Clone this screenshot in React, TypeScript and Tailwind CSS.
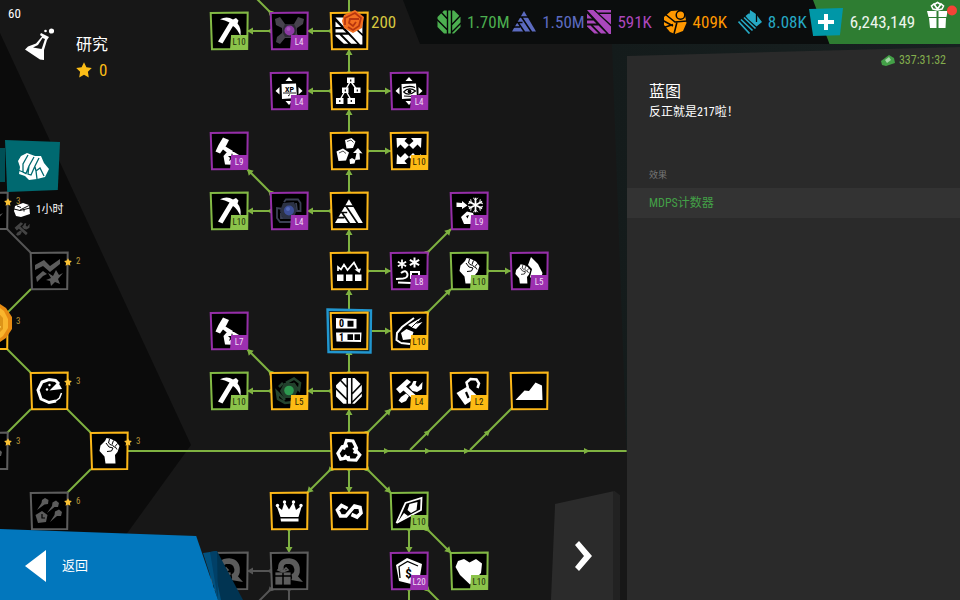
import { useState } from 'react';
import type { ReactNode } from 'react';

type Tone = 'gold' | 'green' | 'purple' | 'locked';

interface TreeNode {
  id: string;
  name: string;
  x: number;
  y: number;
  tone: Tone;
  icon: string;
  level?: string;
  stars?: number;
}

interface Edge {
  from: [number, number];
  to: [number, number];
  locked?: boolean;
  plain?: boolean;
}

const toneColor: Record<Tone, string> = {
  gold: '#fbb718',
  green: '#82b944',
  purple: '#952ea8',
  locked: '#5c5c5c',
};

const badgeClass: Record<Tone, string> = {
  gold: 'bg-[#fdbb14] text-[#2b2200]',
  green: 'bg-[#8bc34a] text-[#1d2b0d]',
  purple: 'bg-[#9c30b0] text-[#f0dcf4]',
  locked: 'bg-[#5c5c5c] text-white',
};

// resource symbols, drawn on a 24x24 grid
const leafSymbol = (
  <>
    <path fill="currentColor" d="M7 0.5H17L23.5 7V17L17 23.5H7L0.5 17V7Z" />
    <path stroke="#060707" strokeWidth="1.4" fill="none" d="M10.500 0V24M14.500 0V24M0 9.500L10.500 20M4 2L10.500 9M24 5L14.500 15M24 13L14.500 22.500" />
  </>
);

const triangleSymbol = (
  <>
    <path fill="currentColor" d="M12 1L24 21.5H0Z" />
    <path stroke="#060707" strokeWidth="1.5" fill="none" d="M7 7H17M3 12.500H10.500M9.500 7L19.500 22M0 17H8M6 12.500L12.500 22" />
  </>
);

const stripeSymbol = (
  <path fill="currentColor" d="M0 0H6.500L24 16.500V24H22ZM8.500 0H24V2.500H11ZM12.500 4H24V14.500ZM0 3.500L5 8.500H0ZM0 10.500H6.500L9.500 13.500H0ZM0 15.500H3.500L11.500 23.500H7.500L0 16.500ZM6 15.500H11.500L19.500 23.500H14Z" />
);

const orbSymbol = (
  <>
    <path fill="currentColor" d="M8 1L15 0.5L22 5L23.5 13L20 21L12 24L7 22L1 15L1 7Z" />
    <path stroke="#060707" strokeWidth="1.600" fill="none" d="M2 4L12 12L24 11M0 10.500L10 16M1 17.500L10 14.500M14 12L11 24" />
    <circle cx="17.500" cy="5" r="4.300" fill="currentColor" stroke="#060707" strokeWidth="1.500" />
  </>
);

const shardSymbol = (
  <>
    <path fill="currentColor" d="M12 0L18 4V12L11.500 6.500ZM19 5.500L24 12L18.500 16.500L10 9L7.500 6L10.500 3.500Z" />
    <path stroke="currentColor" strokeWidth="1.700" fill="none" d="M6 7.500L17.500 18.500M3 9.500L14.500 20.500M0.500 11.500L11.500 23.500" />
    <path stroke="#060707" strokeWidth="1.300" fill="none" d="M18.500 3V12" />
  </>
);

const pickaxe = (
  <path d="M11 8.300Q18 4.500 24 8.500L27 7L29.500 9.500L28.500 12.500Q32.500 17 31.500 25Q28 17.500 24 15L13.500 32.500L9 30.500L20.500 11.500Q16 9 11 8.300Z" />
);

const fist = (
  <>
    <path d="M16 10L17.500 7L22 8L27 10.500L30.500 15L28.500 21L26 24L26.500 32.500H16.500L15.500 25.500L10.500 20L11.500 14.500Z" />
    <path stroke="#000" strokeWidth="1" fill="none" d="M17 12L20 16L24 17L22.500 20L18 20.500M20.500 8L19.500 12L22.500 14.500M24.500 9.500L23 13.500L25.500 16.500M28.500 12.500L26 15.500L28 18.500" />
  </>
);

const hammerRock = (
  <>
    <path d="M14 6.500L20 9L17.500 14L16.500 15.500L24 20L21 24L14 18.500L11 22.500L6.500 20.500L9.500 14Z" />
    <path d="M14.500 25L18.500 20.500L25 21L30 24L32 34L16 33.500Z" />
    <path fill="#000" d="M23 22L24 25L27 25L25 27L26 30L23 28L20 30L21 27L19 25H22Z" />
  </>
);

const compassArrows = <path d="M20 6L23.500 10H16.500ZM6.500 20L10.500 16V23.500ZM33.500 20L29.500 16V23.500ZM20 34L16.500 30H23.500ZM12.500 13L27 12.500L28 27L13 28Z" />;

const corner = 'M7.500 7L18 7L15.500 10L20 14L16 18L11.500 13.500L8 17Z';

const snow = 'M0 -6V6M-5.500 -3L5.500 3M-5.500 3L5.500 -3';

const knotArm = 'M14.500 18.500L17.500 9.500L24 10L27.500 17L25.500 22.500';

const giftQuarter = (
  <>
    <path fill="none" stroke="currentColor" strokeWidth="5.500" d="M12 19Q10.500 10 20 10Q29 11 28 21Q27 25 23 26" />
    <path d="M26 22L34 31L22 29Z" />
    <path stroke="#000" strokeWidth="0.800" d="M6 21H22V34H6Z" />
    <path stroke="#000" strokeWidth="1.500" d="M14 21V34M6 25H22" />
    <path fill="none" stroke="currentColor" strokeWidth="1.600" d="M14 21L9 19L11 17L14 20L17 17L19 19Z" />
  </>
);

const icons: Record<string, ReactNode> = {
  pickaxe,
  fist,
  hammerRock,
  giftQuarter,
  droneViolet: (
    <>
      <path fill="#47424d" d="M6 8L11 6L16 13H25L29 6L35 8L34 13L28 17V23L34 29L31 33L25 27H16L11 33L7 31L8 26L13 22V17L7 14Z" />
      <path fill="#2f2b36" d="M16 13H25L28 19L25 26H16L13 20Z" />
      <circle cx="20.500" cy="19.500" r="5" fill="#8d3aa3" />
      <circle cx="19.500" cy="18" r="2" fill="#a758ba" />
    </>
  ),
  droneBlue: (
    <>
      <path fill="none" stroke="#3b4054" strokeWidth="1.800" d="M15 11L17 8.500H29L31.500 12V20H28L27 12M14 18L8 17V27L11 31H22L24 28M12 22V27H17" />
      <path fill="#2c3245" d="M14 12L25 11L28 19L24 28L14 28L11 20Z" />
      <circle cx="20" cy="19.500" r="5" fill="#3d4f99" />
      <circle cx="19" cy="18" r="2" fill="#5469b7" />
    </>
  ),
  droneGreen: (
    <>
      <path fill="none" stroke="#25442f" strokeWidth="2.600" d="M17 12L25 7.500L31 12L30 19L27 16L24 12M26 27L24 31L16 32L9 28L8 21L12 25L16 29M10 16L14 12" />
      <path fill="#21402b" d="M15 12H26L29 19L25 27H15L11 20Z" />
      <circle cx="20" cy="19.500" r="4.800" fill="#2e9950" />
    </>
  ),
  leaf: <g transform="translate(6.500 6.500) scale(1.120)">{leafSymbol}</g>,
  triangle: <g transform="translate(6 7) scale(1.160)">{triangleSymbol}</g>,
  stripes: <g transform="translate(6.500 6.500) scale(1.120)">{stripeSymbol}</g>,
  xp: (
    <>
      {compassArrows}
      <path stroke="#000" strokeWidth="0.900" d="M14 22H27M19 25L21 23.500" />
      <text x="20.500" y="20.500" textAnchor="middle" fontSize="8" fontWeight="700" fill="#000">XP</text>
    </>
  ),
  eye: (
    <>
      {compassArrows}
      <path fill="none" stroke="#000" strokeWidth="1.200" d="M14 17Q20 14 26 16.500M14.500 21Q20 15.500 26.500 20Q20 25.500 14.500 21M15 25L24 25.500" />
      <circle cx="20.500" cy="20.500" r="1.900" fill="#000" />
    </>
  ),
  network: (
    <>
      <path stroke="currentColor" strokeWidth="1.400" fill="none" d="M21.500 10L16.500 19L11 29M16.500 19L22 29M21.500 10L28 19" />
      <path d="M18 6.500H25.500V12H18ZM13 16.500H19.500V22H13ZM25 16.500H31.500V22H25ZM7 27H14.500V33H7ZM18.500 27H26V33H18.500Z" />
      <path stroke="#000" strokeWidth="1.200" d="M21.700 8.500V10.500M16.300 18.500V20.500M28.300 18.500V20.500M10.800 29V31M22.300 29V31" />
    </>
  ),
  rocks: (
    <>
      <path d="M16 9L22.500 7L26.500 10.500L24 17L17.500 17.500ZM7.500 20.500L14 17.500L20 21.500L17 29.500L9.500 30ZM20.500 28.500L23 27L26.500 29L25.500 32.500L21 33ZM29 17L33.500 22.500L30.500 22L31 28.500L26 29L27.500 22L24 22Z" />
      <path stroke="#000" strokeWidth="0.700" fill="none" d="M18 10.500L22 9L24.500 11.500M10 22L14 20L17 22.500" />
    </>
  ),
  expand: (
    <>
      <path d={corner} />
      <path d={corner} transform="translate(40 0) scale(-1 1)" />
      <path d={corner} transform="translate(0 40) scale(1 -1)" />
      <path d={corner} transform="translate(40 40) scale(-1 -1)" />
    </>
  ),
  freeze: (
    <>
      <path d="M7.500 11.500L13 12V10L18.500 14.500L13 18V16H7.500ZM12 26L18 20.500L24 22L26 28L23 33H15Z" />
      <path d="M17 25L20 24L18.500 27.500Z" fill="#000" />
      <g stroke="currentColor" strokeWidth="1.400" fill="none" transform="translate(26.500 14) scale(1.200)">
        <path d={snow} />
        <path strokeWidth="0.800" d="M-2 -6L0 -4L2 -6M-2 6L0 4L2 6M-6.200 -1L-3.500 -2L-4 -4.800M6.200 1L3.500 2L4 4.800M-6.200 1L-3.500 2L-4 4.800M6.200 -1L3.500 -2L4 -4.800" />
      </g>
    </>
  ),
  volatility: (
    <>
      <path d="M8 23.500H14.500V30H8ZM17 23.500H23.500V30H17ZM26 23.500H32.500V30H26Z" />
      <path stroke="currentColor" strokeWidth="1.700" fill="none" d="M9 20V16L12 18.500L15 13.500L18.500 19L25 11.500L29 19" />
      <path d="M25.500 18.500L32 17.500L30.500 22Z" />
    </>
  ),
  wind: (
    <>
      <g stroke="currentColor" strokeWidth="2.300" fill="none">
        <path d={snow} transform="translate(13 13) scale(.75)" />
        <path d={snow} transform="translate(25.500 11.500) scale(.85)" />
      </g>
      <path stroke="currentColor" strokeWidth="2" fill="none" d="M12 22Q17 18 18.500 23Q19 27 14 27.500L7 28M22 28V21H30V25M9 31.500L22 32" />
    </>
  ),
  fireFist: (
    <>
      <path d="M22 6L29 13L33.500 22L32 28L26 31L21 26L23 18L19 14Z" />
      <g transform="translate(-1.500 8) scale(.75)">
        <g stroke="#000" strokeWidth="2.500">{fist}</g>
        {fist}
      </g>
    </>
  ),
  binary: (
    <>
      <path d="M7 7L27.500 8V17.500H7ZM7 21.500H32.500L32 31L7.500 30.500Z" />
      <path fill="#000" d="M18.500 9.700H24.500V15.700H18.500ZM18.500 23.300H24V29H18.500ZM25.500 23.300H31V29H25.500Z" />
      <text x="10" y="16" fontSize="10" fontWeight="700" fill="#000">0</text>
      <text x="10" y="29.700" fontSize="10" fontWeight="700" fill="#000">1</text>
    </>
  ),
  meteor: (
    <>
      <path fill="none" stroke="currentColor" strokeWidth="2" d="M12 32L7.500 29L8 22L13 16L25 7M12 32L21 33" />
      <path d="M19 14L32.500 6.500L27 13L33.500 11L27 18L24 17Z" />
      <path stroke="#000" strokeWidth="0.900" d="M21 18L29 10" />
      <path d="M12 22L17.500 18L24.500 21L22.500 28L14 29Z" />
    </>
  ),
  tools: (
    <>
      <path d="M18 8L22 11L17 15.500L30 27L27 31L14.500 19.500L11 22.500L7 18Z" />
      <path d="M24.500 10L27.500 10L26.500 14L29 16L33.500 11L33 18L28 21L23.500 20L20 16L22.500 14Z" />
      <path d="M17 22.500L20 25L17 30L12.500 32L9.500 29.500L12 26Z" />
    </>
  ),
  toolsLocked: (
    <path d="M6 14L15 9L21 15L31 8V13L21 21L14 15L6 19ZM7 26L14 20L18 23L14 25L8 31ZM19 22L24 25L27 19L30 24L34 22L29 28L31 33L26 31L22 35L21 30L17 29L22 27Z" />
  ),
  padlock: (
    <>
      <path d="M7.500 22L18.500 15.500L29 25.500L16 34Z" />
      <path fill="none" stroke="currentColor" strokeWidth="2.500" d="M19 17L17.500 11.500L21.500 8L27.500 8.500L30 12.500L28.500 17" />
      <path stroke="#000" strokeWidth="2.200" d="M17 21L19.500 27" />
    </>
  ),
  area: <path d="M6.500 29L15.500 19.500L20 20L26.500 11.500L33 14.500L33.500 29Z" />,
  knot: (
    <g fill="none" stroke="currentColor" strokeWidth="3.200">
      <path d={knotArm} />
      <path d={knotArm} transform="rotate(120 20 20.500)" />
      <path d={knotArm} transform="rotate(240 20 20.500)" />
    </g>
  ),
  crown: (
    <>
      <path d="M7.500 14.500L13 19L15.500 11L20 18.500L24.500 11L27 19L33 14.500L29.500 26H11.500ZM11.500 27.500H29.500V30.500H12Z" />
      <circle cx="8.500" cy="14.500" r="1.700" />
      <circle cx="15.500" cy="11" r="1.700" />
      <circle cx="24.500" cy="11" r="1.700" />
      <circle cx="32" cy="14.500" r="1.700" />
    </>
  ),
  infinity: <path fill="none" stroke="currentColor" strokeWidth="3.600" d="M18.500 17.500L12.500 14.500L8.500 19L11.500 25H17L25.500 15L31 16.500L32 22L28 26L22.500 23.500" />,
  kite: (
    <>
      <path fill="none" stroke="currentColor" strokeWidth="1.800" d="M7.500 32L16.500 12L32.500 7L32 19L7.500 32" />
      <path d="M20.500 13L28.500 11L27.500 19L22 22L18.500 19ZM15 22L19 25L8 32Z" />
    </>
  ),
  heart: <path d="M9 10L15 8L20.500 11.500L27 8L33 12.500L32 22L21 33.500L11 24L6.500 16Z" />,
  bounty: (
    <>
      <path d="M7 14L18 7L33 13L31 25L22 33L10 30Z" />
      <path fill="none" stroke="#000" strokeWidth="1.300" d="M11 27L10 15.500L18.500 10.500L29 15" />
      <text x="19.500" y="27" textAnchor="middle" fontSize="13" fontWeight="700" fill="#000">$</text>
    </>
  ),
  crescent: (
    <>
      <path fill="none" stroke="currentColor" strokeWidth="3" d="M30 13L26.500 9.500L20 8.500L13 11L9 19L12 28L20 31.500L27 30" />
      <path fill="none" stroke="currentColor" strokeWidth="1.500" d="M26 30.500L30.500 27L32.500 22" />
      <path d="M20.500 19.500L29 11L33 18Z" />
      <circle cx="20.500" cy="14" r="1.200" />
      <circle cx="18" cy="18.500" r="1.200" />
    </>
  ),
  comets: (
    <>
      <path d="M13 9L16 7L19.500 9L19 13L15.500 13.500L8 19L12.500 12ZM23.500 11.500L27 9.500L30 12L29 16L25.500 16L18 22L23 15ZM26 20.500L30 18.500L33 21L32 25L28 25L21 31L25.500 24ZM6.500 24L13 20L18.500 24L17 31L9 32Z" />
      <path fill="none" stroke="#000" strokeWidth="1.200" d="M13 23V27H16" />
    </>
  ),
};

const nodes: TreeNode[] = [
  { id: 'a1', name: 'Mining', x: 229, y: 31, tone: 'green', icon: 'pickaxe', level: 'L10' },
  { id: 'a2', name: 'Drone', x: 289, y: 31, tone: 'purple', icon: 'droneViolet', level: 'L4' },
  { id: 'a3', name: 'Stripes', x: 349, y: 31, tone: 'gold', icon: 'stripes' },
  { id: 'b1', name: 'XP', x: 289, y: 91, tone: 'purple', icon: 'xp', level: 'L4' },
  { id: 'b2', name: 'Network', x: 349, y: 91, tone: 'gold', icon: 'network' },
  { id: 'b3', name: 'Sight', x: 409, y: 91, tone: 'purple', icon: 'eye', level: 'L4' },
  { id: 'c1', name: 'Smash', x: 229, y: 151, tone: 'purple', icon: 'hammerRock', level: 'L9' },
  { id: 'c2', name: 'Rocks', x: 349, y: 151, tone: 'gold', icon: 'rocks' },
  { id: 'c3', name: 'Expand', x: 409, y: 151, tone: 'gold', icon: 'expand', level: 'L10' },
  { id: 'd1', name: 'Mining', x: 229, y: 211, tone: 'green', icon: 'pickaxe', level: 'L10' },
  { id: 'd2', name: 'Drone', x: 289, y: 211, tone: 'purple', icon: 'droneBlue', level: 'L4' },
  { id: 'd3', name: 'Triangle', x: 349, y: 211, tone: 'gold', icon: 'triangle' },
  { id: 'd4', name: 'Freeze', x: 469, y: 211, tone: 'purple', icon: 'freeze', level: 'L9' },
  { id: 'e1', name: 'Market', x: 349, y: 271, tone: 'gold', icon: 'volatility' },
  { id: 'e2', name: 'Wind', x: 409, y: 271, tone: 'purple', icon: 'wind', level: 'L8' },
  { id: 'e3', name: 'Strength', x: 469, y: 271, tone: 'green', icon: 'fist', level: 'L10' },
  { id: 'e4', name: 'Fire fist', x: 529, y: 271, tone: 'purple', icon: 'fireFist', level: 'L5' },
  { id: 'f1', name: 'Smash', x: 229, y: 331, tone: 'purple', icon: 'hammerRock', level: 'L7' },
  { id: 'f2', name: 'MDPS', x: 349, y: 331, tone: 'gold', icon: 'binary' },
  { id: 'f3', name: 'Meteor', x: 409, y: 331, tone: 'gold', icon: 'meteor', level: 'L10' },
  { id: 'g1', name: 'Mining', x: 229, y: 391, tone: 'green', icon: 'pickaxe', level: 'L10' },
  { id: 'g2', name: 'Drone', x: 289, y: 391, tone: 'gold', icon: 'droneGreen', level: 'L5' },
  { id: 'g3', name: 'Leaf', x: 349, y: 391, tone: 'gold', icon: 'leaf' },
  { id: 'g4', name: 'Tools', x: 409, y: 391, tone: 'gold', icon: 'tools', level: 'L4' },
  { id: 'g5', name: 'Unlock', x: 469, y: 391, tone: 'gold', icon: 'padlock', level: 'L2' },
  { id: 'g6', name: 'Statistics', x: 529, y: 391, tone: 'gold', icon: 'area' },
  { id: 'h1', name: 'Core', x: 349, y: 451, tone: 'gold', icon: 'knot' },
  { id: 'i1', name: 'Crown', x: 289, y: 511, tone: 'gold', icon: 'crown' },
  { id: 'i2', name: 'Infinity', x: 349, y: 511, tone: 'gold', icon: 'infinity' },
  { id: 'i3', name: 'Kite', x: 409, y: 511, tone: 'green', icon: 'kite', level: 'L10' },
  { id: 'j1', name: 'Gift', x: 229, y: 571, tone: 'locked', icon: 'giftQuarter' },
  { id: 'j2', name: 'Gift', x: 289, y: 571, tone: 'locked', icon: 'giftQuarter' },
  { id: 'j3', name: 'Bounty', x: 409, y: 571, tone: 'purple', icon: 'bounty', level: 'L20' },
  { id: 'j4', name: 'Heart', x: 469, y: 571, tone: 'green', icon: 'heart', level: 'L10' },
  { id: 'l1', name: 'Tools', x: -11, y: 211, tone: 'locked', icon: 'toolsLocked', stars: 3 },
  { id: 'l2', name: 'Tools', x: 49, y: 271, tone: 'locked', icon: 'toolsLocked', stars: 2 },
  { id: 'l3', name: 'Coin', x: -11, y: 331, tone: 'gold', icon: 'area', stars: 3 },
  { id: 'l4', name: 'Crescent', x: 49, y: 391, tone: 'gold', icon: 'crescent', stars: 3 },
  { id: 'l5', name: 'Comets', x: -11, y: 451, tone: 'locked', icon: 'comets', stars: 3 },
  { id: 'l6', name: 'Fist', x: 109, y: 451, tone: 'gold', icon: 'fist', stars: 3 },
  { id: 'l7', name: 'Comets', x: 49, y: 511, tone: 'locked', icon: 'comets', stars: 6 },
];

const edges: Edge[] = [
  { from: [349, 31], to: [349, -29] },
  { from: [349, 31], to: [289, 31] },
  { from: [289, 31], to: [229, 31] },
  { from: [289, 31], to: [229, -29] },
  { from: [349, 91], to: [349, 31] },
  { from: [349, 91], to: [289, 91] },
  { from: [349, 91], to: [409, 91] },
  { from: [349, 151], to: [349, 91] },
  { from: [349, 151], to: [409, 151] },
  { from: [349, 211], to: [349, 151] },
  { from: [349, 211], to: [289, 211] },
  { from: [289, 211], to: [229, 211] },
  { from: [289, 211], to: [229, 151] },
  { from: [349, 271], to: [349, 211] },
  { from: [349, 271], to: [409, 271] },
  { from: [409, 271], to: [469, 211] },
  { from: [349, 331], to: [349, 271] },
  { from: [349, 331], to: [409, 331] },
  { from: [409, 331], to: [469, 271] },
  { from: [469, 271], to: [529, 271] },
  { from: [349, 391], to: [349, 331] },
  { from: [349, 391], to: [289, 391] },
  { from: [289, 391], to: [229, 391] },
  { from: [289, 391], to: [229, 331] },
  { from: [349, 451], to: [349, 391] },
  { from: [349, 451], to: [409, 391] },
  { from: [349, 451], to: [289, 511] },
  { from: [349, 451], to: [349, 511] },
  { from: [349, 451], to: [409, 511] },
  { from: [289, 511], to: [289, 571] },
  { from: [409, 511], to: [409, 571] },
  { from: [409, 511], to: [469, 571] },
  { from: [409, 571], to: [409, 631] },
  { from: [409, 571], to: [469, 631] },
  { from: [289, 571], to: [229, 571], locked: true },
  { from: [289, 571], to: [229, 631], locked: true },
  { from: [289, 571], to: [289, 631], locked: true },
  { from: [49, 271], to: [-11, 211], locked: true, plain: true },
  { from: [49, 271], to: [-11, 331], plain: true },
  { from: [-11, 331], to: [49, 391], plain: true },
  { from: [49, 391], to: [109, 451], plain: true },
  { from: [49, 391], to: [-11, 451], plain: true },
  { from: [109, 451], to: [49, 511], plain: true },
];

const resources = [
  { name: 'leaf', amount: '1.70M', color: 'text-[#4caf50]', symbol: leafSymbol },
  { name: 'triangle', amount: '1.50M', color: 'text-[#5c6bc0]', symbol: triangleSymbol },
  { name: 'stripes', amount: '591K', color: 'text-[#ab47bc]', symbol: stripeSymbol },
  { name: 'orb', amount: '409K', color: 'text-[#ff9800]', symbol: orbSymbol },
  { name: 'shard', amount: '8.08K', color: 'text-[#26a9c4]', symbol: shardSymbol },
];

function Star({ className }: { className: string }) {
  return (
    <svg viewBox="0 0 16 16" className={className} fill="currentColor" aria-hidden="true">
      <path d="M8 0.300L10.400 5.200L15.800 6L11.900 9.800L12.800 15.400L8 12.800L3.200 15.400L4.100 9.800L0.200 6L5.600 5.200Z" />
    </svg>
  );
}

function EdgeLine({ from, to, locked, plain }: Edge) {
  const dx = Math.sign(to[0] - from[0]);
  const dy = Math.sign(to[1] - from[1]);
  const x1 = from[0] + dx * 18;
  const y1 = from[1] + dy * 18;
  const x2 = to[0] - dx * 18;
  const y2 = to[1] - dy * 18;
  const angle = (Math.atan2(dy, dx) * 180) / Math.PI;
  const color = locked ? '#555555' : '#7fb241';

  return (
    <g stroke={color} fill={color}>
      <line x1={x1} y1={y1} x2={x2} y2={y2} strokeWidth="2" />
      {!plain && (
        <>
          <path stroke="none" d="M-1 -3L4 0L-1 3Z" transform={`translate(${x1} ${y1}) rotate(${angle})`} />
          <path stroke="none" d="M-6 -3.500L0 0L-6 3.500Z" transform={`translate(${x2} ${y2}) rotate(${angle})`} />
        </>
      )}
    </g>
  );
}

function NodeButton({ node, selected, onSelect }: { node: TreeNode; selected: boolean; onSelect: () => void }) {
  return (
    <button
      type="button"
      aria-label={node.name}
      aria-pressed={selected}
      onClick={onSelect}
      className="pointer-events-auto absolute size-10"
      style={{ left: node.x - 20, top: node.y - 20 }}
    >
      <svg viewBox="0 0 40 40" className="size-10 overflow-visible" aria-hidden="true">
        {selected && <path d="M-1.500 -1.500L42 -0.500L41.500 41.500L-0.500 41Z" fill="#0b2a38" stroke="#2196cf" strokeWidth="2.400" />}
        <path d="M1.700 2L38.700 1.600L38.200 37.900L3 38.200Z" fill="#000" stroke={toneColor[node.tone]} strokeWidth="2" />
        <g className={node.tone === 'locked' ? 'text-[#5c5c5c]' : 'text-white'} fill="currentColor">
          {icons[node.icon]}
        </g>
      </svg>
      {node.level && (
        <span
          className={`absolute right-px bottom-px flex h-[15px] w-[18px] items-center justify-center text-[9px] [clip-path:polygon(6%_0,100%_0,97%_100%,0_100%)] ${badgeClass[node.tone]}`}
        >
          {node.level}
        </span>
      )}
      {node.stars && (
        <span className="absolute top-1 left-[35px] flex items-center gap-1 text-[9px] text-[#b8973a]">
          <Star className="size-2 text-[#fcc233]" />
          {node.stars}
        </span>
      )}
    </button>
  );
}

function ResearchMap({ selected, onSelect }: { selected: string; onSelect: (id: string) => void }) {
  return (
    <div className="absolute inset-0 overflow-hidden">
      <svg className="absolute inset-0 h-full w-full" aria-hidden="true">
        <path d="M0 33L191 445L128 532L70 600H0Z" fill="#0b0b0b" />
        {edges.map((edge, i) => (
          <EdgeLine key={i} {...edge} />
        ))}
        <g stroke="#7fb241" fill="#7fb241" strokeWidth="2">
          <path d="M128 451H331M368 451H2000M410 450L452 408M470 450L512 408" />
          {[387, 428, 467, 587].map((x) => (
            <path key={x} stroke="none" d={`M${x - 3} 448L${x + 3} 451L${x - 3} 454Z`} />
          ))}
          {[428, 488].map((x) => (
            <path key={x} stroke="none" d="M-3 -3L3 0L-3 3Z" transform={`translate(${x} 432) rotate(-45)`} />
          ))}
        </g>
      </svg>
      {nodes.map((node) => (
        <NodeButton key={node.id} node={node} selected={node.id === selected} onSelect={() => onSelect(node.id)} />
      ))}

      {/* cost of the next stripe upgrade */}
      <div className="absolute top-[10px] left-[341px] flex items-center gap-1.5 text-[17px] leading-6 text-[#d6c840]">
        <svg viewBox="0 0 24 24" className="size-6" aria-hidden="true">
          <path fill="#f36f21" d="M3 5L14 0L23 7L21 18L12 23L3 18L1 11Z" />
          <path fill="none" stroke="#b7360f" strokeWidth="1.800" d="M4 15V8L14 3L20 8L18 16L12 20L7 17M18 9L9 9L8 13L12 16L15 12" />
        </svg>
        200
      </div>

      <svg viewBox="0 0 44 44" className="absolute top-[301px] -left-8 size-11" aria-hidden="true">
        <path fill="#e78b12" d="M15 1H29L38 7L44 16V28L38 37L29 43H15L6 37L0 28V16L6 7Z" />
        <path fill="#f9b52d" d="M17 4H28L36 10L40 18V27L35 35L28 40H17L8 34L3 26V16L8 9Z" />
        <path fill="#dd9418" d="M18 8H27L35 17V28L27 36H18L9 28V16Z" />
        <path fill="#ffd35a" d="M20 12L27 16L33 26L27 34L16 33Z" />
      </svg>
    </div>
  );
}

function ResourceBar() {
  return (
    <div className="relative flex h-11 w-[557px] items-center">
      <div className="absolute inset-0 bg-[#0b0d0d] [clip-path:polygon(0_0,100%_0,100%_100%,17px_100%)]" />
      <ul className="relative grid w-[410px] grid-cols-5 pl-[34px]">
        {resources.map((r) => (
          <li key={r.name} className={`flex items-center gap-[6px] text-[17px] leading-6 whitespace-nowrap ${r.color}`}>
            <svg viewBox="0 0 24 24" className="size-6 shrink-0" aria-hidden="true">{r.symbol}</svg>
            {r.amount}
          </li>
        ))}
      </ul>
      <div className="relative flex h-full flex-1 items-center">
        <div className="absolute inset-x-0 top-0 h-12 bg-[#2e7d32] [clip-path:polygon(0_0,100%_0,100%_96%,18px_100%)]" />
        <button
          type="button"
          aria-label="Buy credits"
          className="pointer-events-auto relative -ml-1 flex h-7 w-[34px] items-center justify-center bg-[#0097a7] text-white [clip-path:polygon(0_4%,100%_0,91%_97%,12%_100%)]"
        >
          <svg viewBox="0 0 16 16" className="size-4" fill="currentColor" aria-hidden="true">
            <path d="M6 0H10V6H16V10H10V16H6V10H0V6H6Z" />
          </svg>
        </button>
        <span className="relative flex-1 pr-1 text-center text-[17px] leading-6 text-[#edf5ed]">6,243,149</span>
        <button type="button" aria-label="Gifts" className="pointer-events-auto relative mr-[10px] mb-3.5 h-7 w-6 text-white">
          <svg viewBox="0 0 24 28" className="h-7 w-6 overflow-visible" fill="currentColor" aria-hidden="true">
            <path d="M1 10H10.500V16H2.500ZM12.500 10H21.500L20.500 16H12.500ZM3 17H10.500V27H4ZM12.500 17H20L19.500 27H12.500Z" />
            <path fill="none" stroke="currentColor" strokeWidth="1.600" d="M11.500 9L7 8L5.500 5L8 3L11.500 8L15 3L17.500 5L16 8ZM9 3L11.500 1.500L14 3" />
            <circle cx="26" cy="9.500" r="5" fill="#f44336" />
          </svg>
        </button>
      </div>
    </div>
  );
}

function DetailPanel() {
  return (
    <div className="pointer-events-auto flex w-[348px] shrink-0 bg-linear-to-r from-[#141b1b] to-[#182121] pl-[15px] [clip-path:polygon(0_0,100%_0,100%_100%,15px_100%,15px_75%)]">
      <aside className="flex-1 bg-[#2a2a2a] text-white [clip-path:polygon(0_12px,100%_3px,100%_100%,0_100%)]">
        <div className="flex items-center justify-end gap-1 pt-2 pr-[14px] text-xs text-[#83ad4d]">
          <svg viewBox="0 0 14 12" className="h-3 w-3.5" aria-hidden="true">
            <path fill="#43a047" d="M0 7L8 1L13 4L14 9L5 12L1 11Z" />
            <path fill="#a5d6a7" d="M4 6L8 3L10 6L6 9Z" />
          </svg>
          337:31:32
        </div>
        <div className="px-[22px] pt-3">
          <h2 className="text-base leading-6">蓝图</h2>
          <p className="text-xs leading-4">反正就是217啦！</p>
        </div>
        <h3 className="px-[22px] pt-[47px] text-[9px] leading-4 text-[#777777]">效果</h3>
        <p className="mt-[5px] bg-[#333333] px-[22px] py-1.5 text-xs leading-[18px] text-[#43a047]">MDPS计数器</p>
      </aside>
    </div>
  );
}

export default function App() {
  const [selected, setSelected] = useState('f2');

  return (
    <div className="relative min-h-screen overflow-hidden bg-[#171717] font-['Roboto_Condensed','Roboto','Noto_Sans_CJK_SC',sans-serif] text-white">
      <ResearchMap selected={selected} onSelect={setSelected} />

      <div className="pointer-events-none relative flex min-h-screen flex-col">
        <header className="flex h-11 items-start justify-between">
          <span className="p-2 text-[13px] leading-[11px]">60</span>
          <ResourceBar />
        </header>

        <div className="flex flex-1">
          <main className="flex flex-1 flex-col">
            <div className="-mt-4 flex gap-6 pl-6">
              <svg viewBox="0 0 30 32" className="h-8 w-[30px]" fill="currentColor" aria-hidden="true">
                <path d="M17 5L25 9L23 12L20 22L20 32L16 31.500L1 21.500L4 18.500L12 15.500L18 8.500L16 7Z" />
                <path fill="#171717" d="M18.500 10L21 11L18 20L17.500 21L9 19.500L14 17Z" />
                <circle cx="27.500" cy="3" r="2.600" />
                <circle cx="21.500" cy="3" r="1.300" />
              </svg>
              <div className="-ml-[2px] pt-[7px]">
                <h1 className="text-base leading-5">研究</h1>
                <p className="mt-[5px] flex items-center gap-[7px] text-[17px] leading-5 text-[#fbbd17]">
                  <Star className="size-4" />
                  0
                </p>
              </div>
            </div>

            <div className="mt-[60px] flex items-start">
              <div className="mt-2 h-[34px] w-[5px] bg-[#004f55]" />
              <button
                type="button"
                aria-label="Contracts"
                className="pointer-events-auto flex h-[52px] w-[55px] items-center justify-center bg-[#006970] [clip-path:polygon(0_0,100%_4%,96%_96%,4%_100%)]"
              >
                <svg viewBox="0 0 32 28" className="h-7 w-8" fill="currentColor" aria-hidden="true">
                  <path d="M1 9L4 4L10 1L18 4L24 4L27 11L32 17L28 25L20 27L12 28L8 24L2 22L3 15Z" />
                  <path fill="none" stroke="#006970" strokeWidth="1.300" d="M11 3L6 12V20L9 21.500L12 14L17 5M12 14L11 22L14 23L18 14L22 6M1 18L6 20M18 15L19 19L23 16L27 24M19 19L20 27" />
                </svg>
              </button>
            </div>
            <div className="mt-2 flex items-center gap-[6px] pl-[14px] text-[11px] leading-5">
              <svg viewBox="0 0 16 14" className="h-3.5 w-4" fill="currentColor" aria-hidden="true">
                <path d="M1 3L9 0L15 2L16 11L7 14L2 13L0 8Z" />
                <path fill="none" stroke="#0b0b0b" strokeWidth="1" d="M0 6L6 7.500L16 5M6 7L15 2.500M3 3L7 4.500M10 6.500V8.500" />
              </svg>
              1小时
            </div>
            <svg viewBox="6 6 28 28" className="mt-px ml-[14px] size-4 text-[#444444]" fill="currentColor" aria-hidden="true">
              {icons.tools}
            </svg>

            <div className="mt-auto flex items-end justify-between">
              <div className="flex items-end">
                <button
                  type="button"
                  className="pointer-events-auto flex h-[71px] w-[218px] items-center gap-4 bg-[#0277bd] pt-0.5 pl-[25px] text-[13px] [clip-path:polygon(0_0,90%_10%,100%_100%,0_100%)]"
                >
                  <svg viewBox="0 0 21 32" className="h-8 w-[21px]" fill="currentColor" aria-hidden="true">
                    <path d="M21 0V32L0 16Z" />
                  </svg>
                  返回
                </button>
                <svg viewBox="0 0 40 49" className="-ml-[15px] h-[49px] w-10" aria-hidden="true">
                  <path fill="#01517f" d="M0 2L14 0L22 49H15Z" />
                  <path fill="#013452" d="M14 0L40 49H18L14 30Z" />
                  <path fill="#014067" d="M7 1L14 0L15 49Z" />
                </svg>
              </div>
              <button
                type="button"
                aria-label="Next page"
                className="pointer-events-auto mr-[-8px] flex h-[109px] w-[69px] items-center justify-center bg-linear-to-r from-[#2b2b2b] from-90% to-[#222222] to-90% pt-5 pr-1 [clip-path:polygon(6%_12%,92%_0,100%_4%,100%_100%,0_100%)]"
              >
                <svg viewBox="0 0 17 30" className="h-[30px] w-[17px]" fill="currentColor" aria-hidden="true">
                  <path d="M4 0L17 15L4 30L0 26L9 15L0 4Z" />
                </svg>
              </button>
            </div>
          </main>
          <DetailPanel />
        </div>
      </div>
    </div>
  );
}
